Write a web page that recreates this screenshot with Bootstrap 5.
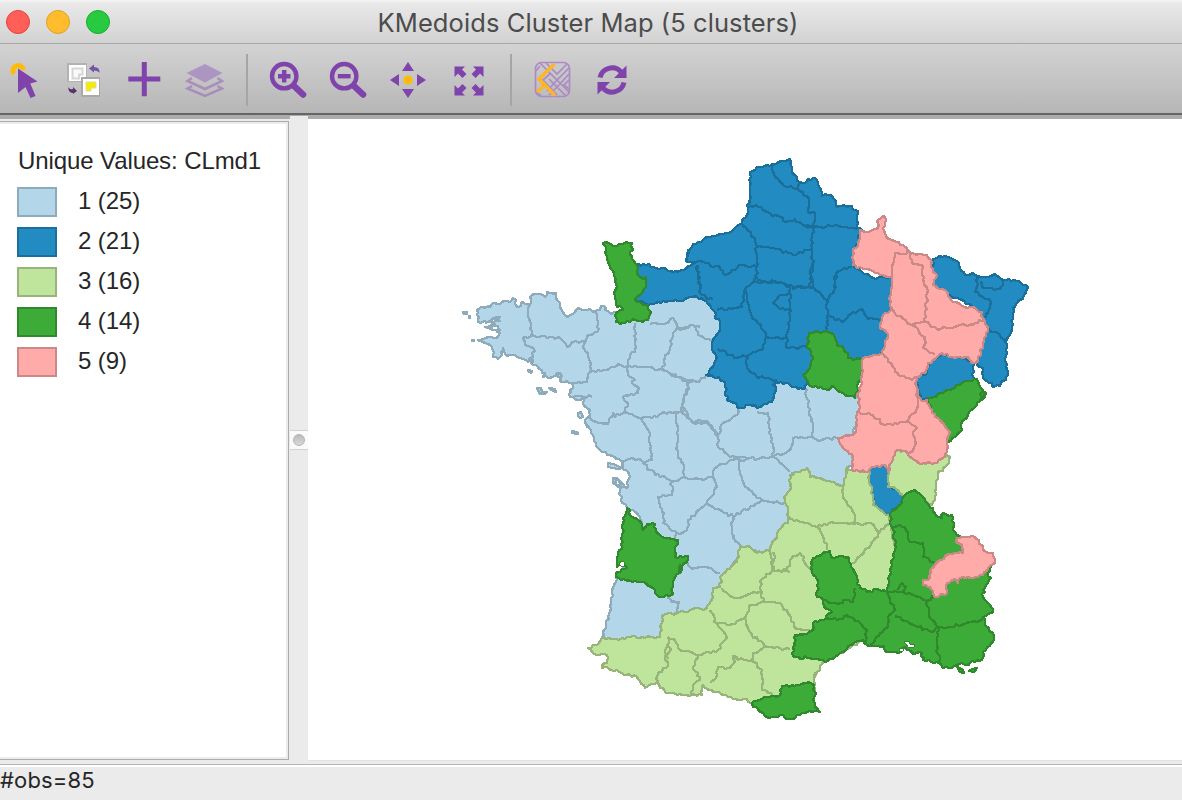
<!DOCTYPE html>
<html lang="en">
<head>
<meta charset="utf-8">
<title>KMedoids Cluster Map</title>
<link href="https://cdn.jsdelivr.net/npm/bootstrap@5.3.0/dist/css/bootstrap.min.css" rel="stylesheet">
<style>
body{background:#ebebeb;font-family:"Liberation Sans",Arial,sans-serif;color:#262626}
.titlebar{height:44px;background:linear-gradient(#f6f6f6 0,#e9e9e9 3px,#d2d2d2);border-bottom:1px solid #a9a9a9}
.lights{left:6px;top:10px;gap:16px}
.lights i{width:24px;height:24px;border:1px solid #e0443e;background:#ff5f57}
.lights i:nth-child(2){background:#ffbd2e;border-color:#dea123}
.lights i:nth-child(3){background:#28ca42;border-color:#1aab29}
.ttl{font:400 25.5px/44px Inter,sans-serif;letter-spacing:.08px;color:#4c4c4c;padding-right:6px;padding-top:1px}
.tools{height:75px;background:linear-gradient(#d3d3d3,#b6b6b6 69px,#646664 69px,#646664 71px,#acacac 71px);padding-bottom:3px}
.tools .btn{width:60px;height:72px;flex:none;border:0}
.tools .btn:first-child{margin-left:-6px}
.tools svg{width:40px;height:40px}
.divide{width:24px;flex:none}
.divide::after{content:"";width:2px;height:52px;margin-left:2px;background:#a5a5a5}
.legendpane{width:290px;flex:none;padding:2px 1px 4px 0;background:#ebebeb}
.legendbox{border:solid #acacac;border-width:1px 1px 1px 0;padding:0}
.legendin{border:solid #ececec;border-width:2px 2px 2px 0;padding:25px 0 0 17px;font-size:24px;line-height:24px;letter-spacing:-.1px}
.lgrow{height:30px;margin-bottom:10px}
.lgrow b{font-weight:400;margin-top:-2px}
.swatch{width:40px;height:30px;border:2px solid;margin-right:21px}
.grip{width:18px;flex:none;margin-top:-3px;background:#ebebeb}
.gripknob{height:20px;margin-top:314px;background:#fafafa;border:1px solid #d2d2d2;border-width:1px 0}
.gripknob i{width:12px;height:12px;background:linear-gradient(#bcbcbc,#d8d8d8);border:1px solid #b4b4b4}
.status{height:36px;border-top:1px solid #b5b5b5;box-shadow:inset 0 2px #fff;font:400 22px/30px Inter,sans-serif;letter-spacing:.15px}
.mapcell{border-bottom:1px solid #e2e2e2;margin-bottom:3px}
</style>
</head>
<body>
<div class="vh-100 d-flex flex-column overflow-hidden">
<header class="titlebar position-relative text-center flex-shrink-0">
<div class="lights position-absolute d-flex"><i class="rounded-circle"></i><i class="rounded-circle"></i><i class="rounded-circle"></i></div>
<div class="ttl">KMedoids Cluster Map (5 clusters)</div>
</header>
<nav class="tools d-flex align-items-center flex-shrink-0">
<button class="btn p-0" aria-label="Select"><svg viewBox="0 0 40 40"><path d="M10 14A5.300 5.300 0 1 1 19.500 10" fill="none" stroke="#fdbc0d" stroke-width="5.200"/><path d="M14 8.500 33.500 21.500 26.300 23.500 31.500 36 26.500 38 21.500 27 14 33Z" fill="#8043ac"/></svg></button>
<button class="btn p-0" aria-label="Invert"><svg viewBox="0 0 40 40"><path d="M3 3h20v19H3Z" fill="#b2b2b2"/><path d="M5 5h17v16H5Z" fill="#fff"/><path d="M8.500 8.500h10v6h-3.500v4h-6.500Z" fill="#fafafa" stroke="#d6d6d6" stroke-width="2"/><path d="M17 17h19v20H17Z" fill="#a9a9a9"/><path d="M19 19h16v16H19Z" fill="#fff"/><path d="M22 22h10v6h-5v3h-5Z" fill="#f3ed00" stroke="#dedb9d"/><path d="M25 8.500 30 4.500V7Q36 7 35.500 13 34 10.500 30 10.500V12.500Z" fill="#7852a3"/><path d="M13 31 9 27V29Q5 30 4.500 26.500 3.500 33 9 33V34Z" fill="#5b3070"/></svg></button>
<button class="btn p-0" aria-label="Add layer"><svg viewBox="0 0 40 40"><path d="M20.300 2V36.300M4.300 19H36.300" stroke="#8043ac" stroke-width="5"/></svg></button>
<button class="btn p-0" aria-label="Layers"><svg viewBox="0 0 40 40" opacity=".62"><path d="M21 4 38.500 13 21 22.500 2.500 13Z" fill="#9e78bf"/><path d="M8 18 3.500 21 21 29 38 21 33.500 18M8 26 3.500 28.500 21 36 38 28.500 33.500 26" fill="none" stroke="#9872bb" stroke-width="2.500"/></svg></button>
<div class="divide d-flex align-items-center justify-content-center"></div>
<button class="btn p-0" aria-label="Zoom in"><svg viewBox="0 0 40 40"><g fill="none" stroke="#8043ac"><circle cx="16.200" cy="16.200" r="12.200" stroke-width="4.400"/><path d="M16.200 10V22.500M10 16.200H22.500" stroke-width="4.400"/><path d="M26 26 35 34.500" stroke-width="6.500" stroke-linecap="round"/></g></svg></button>
<button class="btn p-0" aria-label="Zoom out"><svg viewBox="0 0 40 40"><g fill="none" stroke="#8043ac"><circle cx="16.200" cy="16.200" r="12.200" stroke-width="4.400"/><path d="M9.800 16.200H22.600" stroke-width="4.400"/><path d="M26 26 35 34.500" stroke-width="6.500" stroke-linecap="round"/></g></svg></button>
<button class="btn p-0" aria-label="Pan"><svg viewBox="0 0 40 40"><path d="M20 2 26 11H14ZM20 38 26 29H14ZM2 20 11 14V26ZM38 20 29 14V26Z" fill="#8043ac"/><circle cx="20" cy="20" r="4.600" fill="#fdbc0d"/></svg></button>
<button class="btn p-0" aria-label="Full extent"><svg viewBox="0 0 40 40"><path id="ar" d="M6.500 6.500H17L14 9.500 18.500 14 14.500 18 10 13.500 6.500 17Z" fill="#8043ac"/><use href="#ar" transform="matrix(-1 0 0 1 42 0)"/><use href="#ar" transform="matrix(1 0 0 -1 0 42)"/><use href="#ar" transform="matrix(-1 0 0 -1 42 42)"/></svg></button>
<div class="divide d-flex align-items-center justify-content-center"></div>
<button class="btn p-0" aria-label="Basemap"><svg viewBox="0 0 40 40"><g fill="none" stroke="#ac8ac6" stroke-width="1.700"><rect x="3.500" y="2.500" width="34" height="34" rx="6"/><path d="M4 11 8 6M8 3 25 20 37 8M14 3 25 14 35 4M17 19 25 27 37 14M25 20 37 32M25 27 34 36M19 13 11 20 25 35M25 20 15 31M25 27 17 35M37 20 32 25 37 29M4 31 9 36"/></g><path d="M22.500 4 7 19 23 35.500M13.500 24.500 5 32" fill="none" stroke="#fdb52a" stroke-width="3.600"/></svg></button>
<button class="btn p-0" aria-label="Refresh"><svg viewBox="0 0 40 40"><path d="M8 17.500A12.200 12.200 0 0 1 29 12M32 22.500A12.200 12.200 0 0 1 11 28" fill="none" stroke="#8043ac" stroke-width="5"/><path d="M34.500 5.500V18H22ZM5.500 34.500V22H18Z" fill="#8043ac"/></svg></button>
</nav>
<main class="d-flex flex-grow-1">
<aside class="legendpane d-flex"><div class="legendbox w-100 d-flex"><div class="legendin w-100 bg-white">
<div id="legend"><div style="margin:0 0 14px 1px">Unique Values: CLmd1</div></div>
</div></div></aside>
<div class="grip"><div class="gripknob d-flex align-items-center justify-content-center"><i class="rounded-circle"></i></div></div>
<section class="mapcell bg-white flex-grow-1 overflow-hidden"><svg id="map" class="d-block" width="874" height="640" viewBox="308 119 874 640" shape-rendering="crispEdges" stroke-linejoin="round"></svg></section>
</main>
<footer class="status flex-shrink-0">#obs=85</footer>
</div>
<script src="https://cdn.jsdelivr.net/npm/bootstrap@5.3.0/dist/js/bootstrap.bundle.min.js"></script>
<script>
// Map sheets: a letter picks the sheet origin, followed by x,y pairs in thirds of a pixel.
const O={E:[680,150],F:[840,210],G:[460,230],H:[670,260],I:[560,380],J:[780,380],K:[580,540],L:[780,530]};
const C=[
{n:'1 (25)',f:'#b3d6e9',s:'#8dabba',
a:['G 470,245 450,248 436,240 432,228 412,240 402,245 390,238 375,240 355,235 325,262 310,245 300,220 287,205 288,190 275,190 262,185 255,200 240,192 215,195 212,208 207,226 190,215 175,232 160,205 150,215 125,215 110,222 98,220 90,230 62,232 52,240 55,275 80,275 95,268 110,262 120,262 115,270 90,272 105,282 75,290 85,293 115,288 120,300 110,305 120,310 110,325 85,322 55,330 75,340 97,350 100,382 120,382 130,355 140,378 165,375 180,385 205,395 210,385 220,405 235,410 255,430 250,440 270,445 290,430 302,445 300,452 335,458 340,465 330,480 330,500 350,510 375,502 370,520 390,540 388,560 375,570 380,590 I 75,125 100,165 115,205 150,225 190,245 185,265 205,275 205,300 200,325 185,310 165,295 170,315 180,325 182,360 200,380 225,395 240,410 248,440 270,480 K 108,112 85,230 78,265 65,292 80,300 240,300 260,225 300,222 390,205 410,150 435,110 485,30 I 540,510 630,520 650,470 690,420 690,350 695,280 J 40,285 80,275 90,295 190,318 205,265 220,250 210,175 240,100 250,60 H 500,370 400,340 200,400 160,330 165,140 75,95 G 640,200 560,215 530,215 490,260'
,'G 10,245 22,245 20,252 12,252','G 27,258 31,258 31,263 27,263','G 35,329 43,329 43,332 35,332','G 203,420 215,422 212,428 203,424','G 232,475 242,474 247,485 260,487 255,493 240,491','G 268,475 284,478 288,486 278,484','G 353,548 362,545 368,560 359,565 353,558','I 35,153 50,157 55,162 37,160','I 143,250 158,252 187,265 175,268 145,260','I 160,295 170,293 187,320 180,325 160,308'],
l:['G 212,208 205,250 212,290 212,318 188,325 195,345 220,355 218,400','G 212,318 270,322 300,325 322,350 340,335 375,335 385,315 412,305 415,275 405,245','G 375,335 370,350 385,370 390,395 390,425 380,455 340,460','G 390,425 440,420 475,402 500,412 510,375 525,365 525,280','G 500,412 550,412 608,420 612,390 630,350 640,310 650,285 640,265 620,280 570,282','G 650,285 660,300 700,285 720,290','G 608,420 640,435 685,458 720,455','G 685,458 680,490 668,510 665,545','G 500,412 510,440 525,450 515,460 535,470 535,490 490,500 505,520 495,545 465,560 460,550 445,582 425,580 380,560','G 495,545 545,565 590,560 605,548 665,545','G 340,500 370,500 395,500','G 285,440 300,430 305,440','G 75,280 115,265 120,275','G 85,293 122,300',
'H 20,210 70,195 85,225 130,245','H 0,340 50,362 90,362 108,345','H 50,362 55,380 38,430 45,450 70,490 115,485 145,525 160,490 200,465 205,440','H 145,525 145,560 180,590 240,595','H 262,455 295,460 300,510 310,560 308,590','H 405,375 415,440 428,490 425,530 370,535 360,570 310,590','H 425,530 440,540 500,535',
'H 0,455 20,460 45,450','I 242,115 265,150 272,200 275,240 250,245','I 345,95 355,150 350,200 355,235 370,250 372,292','I 365,95 395,125 440,122 475,170','I 250,245 265,270 335,305 335,345 293,350 300,375 312,400 310,430 350,460 380,450 385,420 440,370 472,320 458,290 415,298 372,292 335,305','I 190,245 215,235 250,245','I 350,460 345,478','I 458,290 465,265 510,240 540,240 640,230 655,240 690,275','I 540,240 540,275 555,320 605,360 600,365 520,410 480,390 440,372','I 605,360 680,372','I 520,410 515,440 520,475 540,497','I 385,545 395,568 425,560 460,570 480,580','K 262,172 275,185 298,187 290,215']},
{n:'2 (21)',f:'#228bc2',s:'#1b6f9b',
a:['E 210,65 240,50 275,42 290,40 310,32 330,28 338,72 360,95 375,100 385,88 405,85 415,105 425,138 435,132 450,135 465,150 470,170 515,168 525,180 535,182 530,235 F 65,60 45,120 45,175 100,205 165,200 165,300 130,340 155,380 135,425 70,455 H 570,300 500,340 415,355 405,385 385,388 375,380 345,370 318,365 310,375 318,390 305,425 270,440 235,435 205,443 198,430 172,420 165,365 125,345 108,345 130,320 140,295 130,275 130,240 150,210 150,185 135,170 130,150 100,120 75,108 45,118 30,122 0,122 G 610,212 565,225 525,210 530,105 550,102 580,112 605,115 640,125 670,120 700,100 690,97 678,90 685,60 E 20,320 35,290 90,260 145,248 185,220 205,190 202,165 212,145 210,130 210,65',
'F 278,148 300,137 320,140 350,152 375,195 387,195 400,188 420,200 445,200 465,192 490,210 530,212 565,230 550,260 520,295 515,350 498,395 500,430 498,470 503,495 480,528 462,532 455,520 430,505 428,475 410,462 400,440 430,340 400,290 280,230','F 225,500 260,490 270,455 305,430 350,440 400,455 400,500 400,515 330,550 270,565 240,565','J 280,250 325,252 335,320 370,345 365,375 335,390 330,405 318,402 285,380 265,320 265,285'],
l:['E 275,42 285,80 310,105 355,115 360,95','E 355,115 370,135 385,140 385,185 405,190 400,230 375,228','E 205,170 235,170 270,190 310,205 310,213 345,208 375,228 400,232 460,228 530,238','E 185,220 225,265 230,290 280,295 340,315 395,295 395,260 405,232','E 230,290 230,385 215,400','E 395,295 400,340 390,370 400,410','E 30,337 70,335 100,350 120,350 135,375 185,345 228,350','E 50,345 55,380 60,420','E 230,392 300,395 340,410 400,410','E 515,350 470,365 468,415','H 80,15 88,60 90,100 130,120','H 140,150 215,140 225,90 255,60','H 225,90 235,130 245,170 285,215 285,240 275,270 235,285 200,295 145,268','H 255,65 330,68 360,80 360,145 355,190 350,235 290,232','H 360,100 325,110 310,130 330,148 360,150','H 365,85 420,80 430,0','H 430,80 470,120 475,165 470,210','H 475,120 495,85 495,45','H 475,165 520,185 550,155 580,150 595,178 630,180','H 350,235 350,265 410,260','H 230,285 230,325 260,350 320,360','F 415,200 405,245 430,262 450,270 445,310 430,325','F 420,215 430,235 480,238 490,212','F 443,355 480,375 498,400']},
{n:'3 (16)',f:'#bfe49c',s:'#97b47b',
a:['J 340,215 380,212 410,245 460,250 495,232 500,225 510,230 500,255 475,280 465,350 455,375 430,355 405,335 370,350 345,325 325,320 325,270 335,240',
'J 60,275 80,265 90,290 140,302 190,318 198,290 200,262 215,270 270,275 265,290 275,330 280,375 318,405 330,410 345,500 340,580 L 330,200 280,200 250,330 130,395 112,425 105,440 K 705,400 703,425 700,470 600,480 520,490 500,478 475,480 430,465 395,450 368,435 365,465 335,465 315,465 265,460 230,430 205,438 195,443 170,410 140,405 80,380 65,385 68,372 82,370 80,345 50,345 25,325 50,315 65,295 100,298 150,290 240,292 250,225 290,220 330,210 380,205 400,170 400,145 420,140 425,105 470,65 480,20 I 540,497 570,500 590,518 630,512 635,490 665,440 685,420 685,390 672,350 690,330 690,285'],
l:['J 190,318 190,350 220,395 222,430','J 20,415 60,425 110,440 155,425 222,432 270,430 300,455 328,432','J 110,440 130,470 140,510','J 300,455 270,500 215,550','J 0,575 20,570 35,535 60,518 85,560 95,575','I 640,515 640,570 690,575','K 570,30 578,90 610,95','K 578,90 540,125 545,155 500,165 465,175 425,145','K 545,155 550,185 510,195 495,235 450,255 410,250 390,210','K 550,185 600,190 630,225 645,265 690,270','K 495,235 515,285 560,320 630,328','K 410,250 440,290 415,330 355,345 300,330 285,300 265,292','K 265,292 255,360 265,370 230,410 230,430','K 265,310 272,330 258,350 268,355','K 355,345 340,380 360,420 340,435 335,465','K 560,320 520,340 515,360 545,390 545,450 580,465','K 515,360 460,355 465,365 450,385 415,380 410,405 390,430','K 455,350 475,355']},
{n:'4 (14)',f:'#3cab38',s:'#308a2d',
a:['G 428,38 445,38 470,48 490,42 515,40 518,60 510,75 530,105 530,130 545,145 558,142 558,170 545,190 525,210 545,222 565,228 572,245 565,270 550,276 530,272 515,270 480,282 468,275 468,250 490,240 485,235 470,230 465,205 470,170 462,130 445,95 435,70 437,50','H 418,220 465,212 495,230 500,255 520,262 535,295 578,298 580,325 565,370 555,415 525,405 485,378 480,388 445,385 415,370 400,345 420,325 430,290 410,255','F 265,565 330,540 370,515 410,508 420,530 437,548 425,570 J 605,35 615,38 590,75 560,110 545,125 545,150 525,170 505,185 480,140 460,105 445,60',
'I 200,385 210,390 207,400 245,435 248,450 260,432 285,432 290,460 320,475 355,480 345,510 345,530 385,528 382,545 365,560 360,580 K 300,75 300,100 285,110 275,165 245,172 230,165 225,150 190,125 140,122 108,112 112,95 140,85 130,65 110,80 118,30 I 185,500 188,430',
'J 405,330 430,350 465,400 485,415 485,402 515,405 522,430 518,450 530,465 600,500 L 600,90 635,105 625,130 632,145 610,180 610,200 640,245 610,260 620,290 640,310 640,335 610,365 605,390 570,400 530,405 490,415 470,395 430,390 425,370 395,370 375,350 355,370 315,362 312,348 260,345 250,330 225,335 175,375 135,395 120,390 75,378 60,388 35,370 45,345 45,315 80,312 100,300 100,280 130,270 155,245 135,235 130,210 110,200 115,160 95,120 98,85 130,70 150,62 155,85 205,80 225,130 240,175 260,185 290,178 320,185 330,120 345,60 340,0 J 335,440 330,400 360,375 375,345','K 515,490 560,470 600,465 605,438 650,435 680,428 702,435 705,500 720,515 690,512 665,520 630,537 600,525 560,532 550,520 520,500','L 530,412 545,418 552,428 540,425','L 568,424 575,416 590,415 582,425','L 560,406 567,406'],
l:['L 130,210 150,220 180,220 190,210 220,215 225,175','L 140,265 180,268 200,255 240,280 260,300 258,340','L 320,185 330,215 345,240 325,265 322,295 300,310 270,345','L 320,185 355,185 400,195 440,212 465,200','L 350,180 365,158 378,170 365,185','L 440,212 450,265 475,290 455,305 400,285 345,258','L 475,290 515,290 575,275 610,268','L 475,290 470,340 478,395','J 335,440 360,435 385,455 390,485 430,490 430,530 465,552']},
{n:'5 (9)',f:'#feaba9',s:'#ca8886',
a:['F 60,60 85,65 110,58 115,30 130,18 137,30 130,55 140,85 170,95 200,115 212,130 235,132 262,135 275,155 278,185 290,195 280,225 320,245 340,275 425,305 432,330 443,355 430,400 415,450 405,460 375,440 345,445 305,430 265,460 255,490 225,500 230,530 240,565 J 425,62 440,60 455,90 465,110 490,130 510,155 500,185 505,200 490,235 465,250 415,248 375,212 345,215 335,245 325,275 315,255 275,260 265,275 215,270 220,230 190,205 175,175 190,170 225,160 230,120 230,95 240,80 232,45 F 50,555 65,520 70,445 125,430 145,380 120,345 135,310 155,295 150,260 155,200 120,195 75,178 38,165 38,125 55,100','L 530,25 560,22 575,18 605,45 608,60 640,70 645,95 625,115 595,142 540,145 535,160 525,148 500,160 495,195 465,200 450,170 430,165 430,150 450,145 455,115 500,75 550,68 545,45 528,35'],
l:['F 155,200 165,130 212,125','F 212,130 215,158 245,165 250,210 262,235 255,335','F 155,300 215,345 260,335 290,358 360,345 400,345 432,325','F 215,345 255,380 250,415 285,435','F 130,430 155,465 175,495 215,510 230,500','J 230,95 280,105 315,135 385,122 410,85 412,30','J 385,122 410,145 400,165 408,190 395,215 385,218']}];
// Subdivides every edge and nudges the new vertices, which gives borders their survey-like roughness.
function rnd(x,y){const v=Math.sin(x*12.9898+y*78.233)*43758.5453;return v-Math.floor(v)-.5}
function trace(str,closed){
  let o,p=[];
  for(const t of str.split(' ')){if(O[t]){o=O[t];continue}const[x,y]=t.split(',').map(Number);p.push([o[0]+x/3,o[1]+y/3])}
  if(closed)p.push(p[0]);
  const small=p.length<8,q=[];
  for(let i=0;i<p.length-1;i++){
    const[a,b]=p[i],[c,d]=p[i+1],L=Math.hypot(c-a,d-b),n=small&&closed?1:Math.max(1,Math.round(L/2.6));
    q.push([a,b]);
    for(let k=1;k<n;k++){const x=a+(c-a)*k/n,y=b+(d-b)*k/n,r=rnd(Math.round(x),Math.round(y))*2.7;q.push([x-(d-b)/L*r,y+(c-a)/L*r])}
  }
  q.push(p[p.length-1]);
  return 'M'+q.map(v=>v.map(n=>Math.round(n)).join(' ')).join('L')+(closed?'Z':'');
}
let m='',g='';
for(const c of C){
  m+=`<g stroke="${c.s}" stroke-width="2.3"><path fill="${c.f}" d="${c.a.map(s=>trace(s,true)).join('')}"/><path fill="none" d="${c.l.map(s=>trace(s,false)).join('')}"/></g>`;
  g+=`<div class="lgrow d-flex align-items-center"><span class="swatch" style="background:${c.f};border-color:${c.s}"></span><b>${c.n}</b></div>`;
}
m+=`<g fill="#fff" stroke="#308a2d" stroke-width="1"><path d="M619 564L621 561L624 562L625 566L622 567L620 565Z"/><path d="M904 642L909 641L910 644L915 644L914 647L908 647L906 644Z"/><path d="M900 648L904 648L903 651L899 651Z"/></g>`;
document.getElementById('map').innerHTML=m;
document.getElementById('legend').insertAdjacentHTML('beforeend',g);
</script>
</body>
</html>
